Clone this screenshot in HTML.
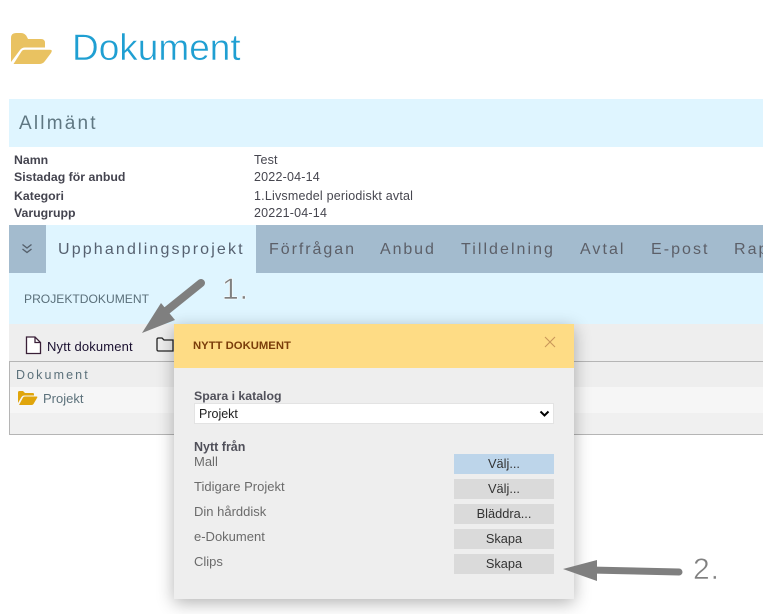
<!DOCTYPE html>
<html><head><meta charset="utf-8"><style>
html,body{margin:0;padding:0;background:#fff;width:763px;height:614px;overflow:hidden}
body{position:relative;font-family:"Liberation Sans",sans-serif}
.a{position:absolute;white-space:nowrap}
.r{font-size:12.5px;line-height:16px;color:#46464f}
.b{font-weight:bold;left:14px;color:#44444f;font-size:12.3px}
.v{left:254px;letter-spacing:.2px}
.t{top:0;height:48px;line-height:49px;font-size:16px;letter-spacing:2.05px;color:#5c5f68}
.btn{left:454px;width:100px;height:20px;background:#dadada;text-align:center;font-size:12.8px;line-height:20px;color:#333}
.l{left:194px;font-size:13px;line-height:16px;color:#6b6b6b}
</style></head><body>
<svg class="a" style="left:10px;top:33px" width="43" height="32" viewBox="0 0 43 32"><path d="M1 29V5Q1 0 6 0H11Q15 0 17 4L18 6H31Q35 6 35 10V14.500H15Q12 14.500 10 17ZM3.500 31 11.500 18.500Q12.500 16.800 15 16.800H40Q43 16.800 41 20L35 28Q33 31 29 31Z" fill="#e9c261"/></svg>
<div class="a" style="left:72px;top:27px;font-size:37px;line-height:42px;color:#1f9fd2;-webkit-text-stroke:.5px #fff">Dokument</div>
<div class="a" style="left:9px;top:99px;width:754px;height:48px;background:#dff5ff"></div>
<div class="a" style="left:19px;top:112px;font-size:19px;line-height:24px;letter-spacing:2.2px;color:#5f7782">Allmänt</div>
<div class="a r b" style="top:152px">Namn</div><div class="a r v" style="top:152px">Test</div>
<div class="a r b" style="top:169px">Sistadag för anbud</div><div class="a r v" style="top:169px">2022-04-14</div>
<div class="a r b" style="top:188px">Kategori</div><div class="a r v" style="top:188px">1.Livsmedel periodiskt avtal</div>
<div class="a r b" style="top:205px">Varugrupp</div><div class="a r v" style="top:205px">20221-04-14</div>
<div class="a" style="left:9px;top:225px;width:754px;height:48px;background:#a3bbce;overflow:hidden">
<div class="a" style="left:37px;top:0;width:210px;height:48px;background:#dff5ff"></div>
<svg class="a" style="left:12px;top:18px" width="12" height="12" viewBox="0 0 12 12"><path d="M1.500 1.500 6 5 10.500 1.500M1.500 6 6 9.500 10.500 6" fill="none" stroke="#55606c" stroke-width="1.400"/></svg>
<div class="a t" style="left:49px;letter-spacing:2.15px;color:#566170">Upphandlingsprojekt</div>
<div class="a t" style="left:260px;letter-spacing:1.95px">Förfrågan</div>
<div class="a t" style="left:371px;letter-spacing:1.9px">Anbud</div>
<div class="a t" style="left:452px">Tilldelning</div>
<div class="a t" style="left:571px">Avtal</div>
<div class="a t" style="left:642px">E-post</div>
<div class="a t" style="left:725px">Rapporter</div>
</div>
<div class="a" style="left:9px;top:273px;width:754px;height:51px;background:#dff5ff"></div>
<div class="a" style="left:24px;top:291px;font-size:12.100px;line-height:16px;color:#5a6f7a">PROJEKTDOKUMENT</div>
<div class="a" style="left:9px;top:324px;width:754px;height:37px;background:#eee"></div>
<svg class="a" style="left:25px;top:336px" width="17" height="19" viewBox="0 0 17 19"><path d="M1.500 1H10L15.500 6.500V17.500H1.500Z" fill="#fff" stroke="#3a2038" stroke-width="1.300"/><path d="M10 1V6.500H15.500" fill="none" stroke="#3a2038" stroke-width="1.300"/></svg>
<div class="a" style="left:47px;top:338px;font-size:13px;line-height:17px;letter-spacing:.15px;color:#1a1030">Nytt dokument</div>
<svg class="a" style="left:156px;top:337px" width="18" height="15" viewBox="0 0 18 15"><path d="M1 12.500V2.500Q1 1 2.500 1H6L8 3H17V14H2.500Q1 14 1 12.500Z" fill="none" stroke="#222" stroke-width="1.300"/></svg>
<div class="a" style="left:9px;top:361px;width:754px;height:72px;border-top:1px solid #b5b5b5;border-bottom:1px solid #b5b5b5;border-left:1px solid #b5b5b5;background:#f0f0f0"></div>
<div class="a" style="left:10px;top:362px;width:753px;height:25px;background:#eee"></div>
<div class="a" style="left:10px;top:387px;width:753px;height:26px;background:#f6f6f6"></div>
<div class="a" style="left:16px;top:367px;font-size:12.500px;line-height:16px;letter-spacing:2.100px;color:#5c717b">Dokument</div>
<svg class="a" style="left:18px;top:391px" width="20" height="14" viewBox="0 0 20 14"><path d="M0 12V1.500Q0 0 1.500 0H5L7 2H15Q16 2 16 3.500V4.500H6Q4.500 4.500 3.500 6ZM1 14 5 6.500Q5.500 5.500 7 5.500H18.500Q20 5.500 19 7L15.500 13Q15 14 13.500 14Z" fill="#e0a50c"/></svg>
<div class="a" style="left:43px;top:390px;font-size:13px;line-height:17px;color:#5c717b">Projekt</div>
<div class="a" style="left:174px;top:324px;width:400px;height:275px;background:#eee;box-shadow:0 4px 16px rgba(0,0,0,.3)"></div>
<div class="a" style="left:174px;top:324px;width:400px;height:44px;background:#fedc85"></div>
<div class="a" style="left:193px;top:338px;font-size:11.300px;line-height:16px;font-weight:bold;color:#7a3d0a">NYTT DOKUMENT</div>
<svg class="a" style="left:544px;top:336px" width="12" height="12" viewBox="0 0 12 12"><path d="M1 1 11 11M11 1 1 11" stroke="#c9975a" stroke-width="1.100" fill="none"/></svg>
<div class="a" style="left:194px;top:388px;font-size:12.300px;line-height:16px;font-weight:bold;color:#50505a">Spara i katalog</div>
<div class="a" style="left:194px;top:403px;width:358px;height:19px;background:#fff;border:1px solid #e3e3e3;font-size:12.500px;line-height:20px;color:#222;text-indent:4px">Projekt</div>
<svg class="a" style="left:539px;top:410px" width="11" height="8" viewBox="0 0 11 8"><path d="M1.500 1.500 5.500 5.500 9.500 1.500" fill="none" stroke="#000" stroke-width="2"/></svg>
<div class="a" style="left:194px;top:439px;font-size:12.500px;line-height:16px;font-weight:bold;color:#50505a">Nytt från</div>
<div class="a l" style="top:454px">Mall</div>
<div class="a l" style="top:479px">Tidigare Projekt</div>
<div class="a l" style="top:504px">Din hårddisk</div>
<div class="a l" style="top:529px">e-Dokument</div>
<div class="a l" style="top:554px">Clips</div>
<div class="a btn" style="top:454px;background:#bdd5ea">Välj...</div>
<div class="a btn" style="top:479px">Välj...</div>
<div class="a btn" style="top:504px">Bläddra...</div>
<div class="a btn" style="top:529px">Skapa</div>
<div class="a btn" style="top:554px">Skapa</div>
<svg class="a" style="left:0;top:0" width="763" height="614" viewBox="0 0 763 614"><path d="M201 283 160 316" stroke="#7f7f7f" stroke-width="8" stroke-linecap="round" fill="none"/><path d="M142 333 161 303 175 320Z" fill="#7f7f7f"/><path d="M590 570 679 572" stroke="#7f7f7f" stroke-width="7" stroke-linecap="round" fill="none"/><path d="M563 569 597 560 597 581Z" fill="#7f7f7f"/></svg>
<div class="a" style="left:222px;top:272px;font-size:30px;line-height:36px;letter-spacing:1px;color:#808080;-webkit-text-stroke:.5px #fff">1.</div>
<div class="a" style="left:693px;top:552px;font-size:30px;line-height:36px;letter-spacing:1px;color:#808080;-webkit-text-stroke:.5px #fff">2.</div>
</body></html>
